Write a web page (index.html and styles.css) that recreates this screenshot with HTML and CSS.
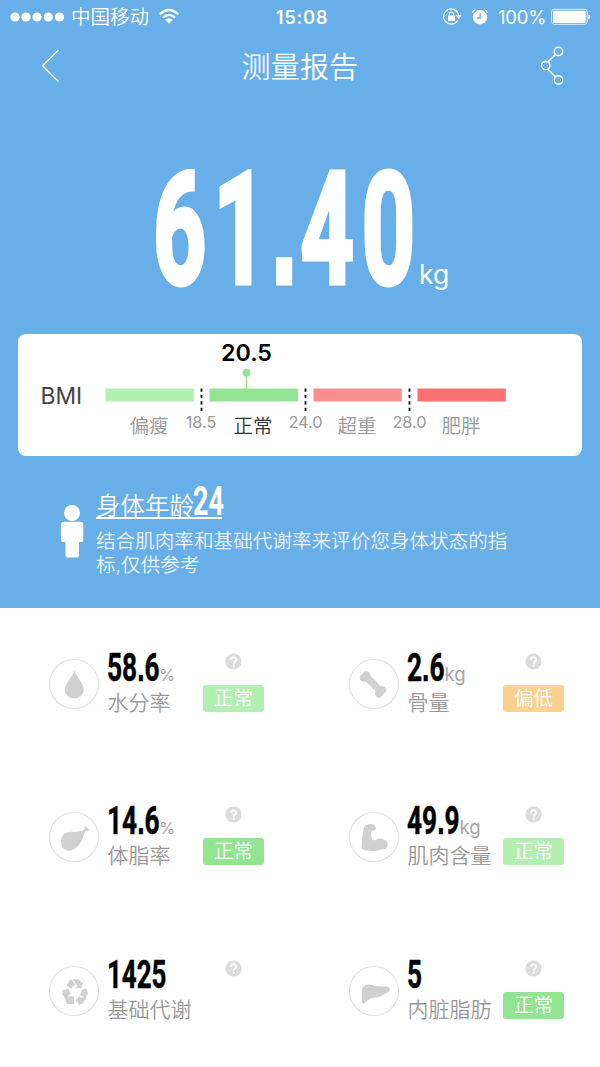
FILE: index.html
```html
<!DOCTYPE html>
<html lang="zh-CN">
<head>
<meta charset="utf-8">
<title>测量报告</title>
<link rel="stylesheet" href="styles.css">
</head>
<body>
<svg width="0" height="0" class="defs">
  <symbol id="help" viewBox="0 0 18 18"><circle cx="9" cy="9" r="8.6" fill="#dcdcdc"/><path d="M6.300 7.100a2.750 2.600 0 1 1 4.300 2.100Q9.200 10 9.100 11.200" fill="none" stroke="#fff" stroke-width="2"/><circle cx="9.100" cy="13.400" r="1.150" fill="#fff"/></symbol>
</svg>
<section class="hero">
  <div class="status-bar">
    <div class="carrier">
      <svg class="signal" width="55" height="10" viewBox="0 0 55 10" fill="#fff"><circle cx="5" cy="5" r="4.600"/><circle cx="16" cy="5" r="4.600"/><circle cx="27" cy="5" r="4.600"/><circle cx="38.300" cy="5" r="4.600"/><circle cx="49.500" cy="5" r="4.600"/></svg>
      <span class="operator">中国移动</span>
      <svg width="20" height="15" viewBox="0 0 20 15" fill="none" stroke="#fff" stroke-width="2.200"><path d="M.8 5.300Q10-3.300 19.200 5.300M3.800 8.700Q10 3 16.200 8.700"/><path d="M6.300 10.800Q10 7.800 13.700 10.800L10 14.700Z" fill="#fff" stroke="none"/></svg>
    </div>
    <time class="clock">15:08</time>
    <div class="indicators">
      <svg width="20" height="18" viewBox="0 0 20 18"><path d="M14.600 12.700A7.600 7.600 0 1 1 15.800 8" fill="none" stroke="#fff" stroke-width="1.200"/><path d="M12.800 7.200h6l-3 3.800z" fill="#fff"/><rect x="5" y="7.600" width="7" height="5.400" rx=".6" fill="#fff"/><path d="M6.400 8V6.200a2.100 2.100 0 0 1 4.200 0V8" fill="none" stroke="#fff" stroke-width="1.200"/></svg>
      <svg class="alarm" width="18" height="18" viewBox="0 0 18 18"><circle cx="9" cy="9.200" r="7.200" fill="#fff"/><path d="M9.200 5.300V10H5.600" fill="none" stroke="#68aee8" stroke-width="1.300"/><path d="M1.500 4.800Q2 2.500 4.300 1.800M16.500 4.800Q16 2.500 13.700 1.800" fill="none" stroke="#fff" stroke-width="1.400"/></svg>
      <span class="charge">100%</span>
      <svg width="40" height="18" viewBox="0 0 40 18"><rect x=".6" y="1.300" width="35.500" height="15" rx="2.500" fill="none" stroke="#fff" stroke-opacity=".8"/><rect x="2" y="2.700" width="32.700" height="12.200" rx="1.200" fill="#fff"/><path d="M37.200 6.200q2.300 1 2.300 2.500t-2.300 2.500z" fill="#fff"/></svg>
    </div>
  </div>
  <nav class="nav">
    <svg width="20" height="34" viewBox="0 0 20 34" fill="none" stroke="#fff" stroke-width="1.500"><path d="M17.500 1 1.500 16.700 17.500 32.500"/></svg>
    <h1 class="title">测量报告</h1>
    <svg width="26" height="42" viewBox="0 0 26 42" fill="none" stroke="#fff" stroke-width="1.500"><circle cx="18.500" cy="6.400" r="4.200"/><circle cx="5.800" cy="20.600" r="4.200"/><circle cx="18.500" cy="35" r="4.200"/><path d="M15.500 9.500 7.800 17M7.800 24.300l7.700 7.500"/></svg>
  </nav>
  <svg class="weight" width="600" height="160" viewBox="0 0 600 160">
    <text class="digits digits-large" transform="scale(.6 1)" x="255 356 452 501 603" y="132.500">61<tspan class="dot">.</tspan>40</text>
    <text class="weight-unit" x="419" y="134">kg</text>
  </svg>
  <div class="card">
    <span class="bmi-label">BMI</span>
    <svg width="410" height="122" viewBox="0 0 410 122">
      <text class="bmi-value" x="143.500" y="26.500" text-anchor="middle" textLength="51" lengthAdjust="spacingAndGlyphs">20.5</text>
      <path d="M143.500 38V56" stroke="#92e392" stroke-width="1.400"/><circle cx="143.500" cy="38.700" r="4" fill="#92e392"/>
      <g><rect x="2.500" y="54.500" width="88.300" height="13" fill="#b2efb1"/><rect x="106.500" y="54.500" width="88.300" height="13" fill="#92e392"/><rect x="210.500" y="54.500" width="88.300" height="13" fill="#f98e8e"/><rect x="314.500" y="54.500" width="88.300" height="13" fill="#fa7171"/></g>
      <path d="M98.500 54.500v23M202.500 54.500v23M306.500 54.500v23" stroke="#000" stroke-width="1.800" stroke-dasharray="3.300 3.100"/>
      <g class="ranges" text-anchor="middle"><text x="46" y="99">偏瘦</text><text class="current" x="150" y="99">正常</text><text x="254" y="99">超重</text><text x="358" y="99">肥胖</text></g>
      <g class="limits" text-anchor="middle"><text x="98" y="94">18.5</text><text x="202.500" y="94">24.0</text><text x="306.500" y="94">28.0</text></g>
    </svg>
  </div>
  <div class="age">
    <svg width="24" height="55" viewBox="0 0 24 55" fill="#fff"><circle cx="12" cy="9" r="8"/><path d="M4 17.800h16a3.300 3.300 0 0 1 3.300 3.300V36a2 2 0 0 1-2 2H19v13.500a2 2 0 0 1-2 2H7.500a2 2 0 0 1-2-2V38H2.900a2 2 0 0 1-2-2V21.100A3.300 3.300 0 0 1 4 17.800z"/></svg>
    <div class="age-text">
      <div class="age-title"><span>身体年龄</span><svg width="30" height="34" viewBox="0 0 30 34"><text class="digits" fill="#fff" x="0" y="30.500" textLength="31" lengthAdjust="spacingAndGlyphs">24</text></svg></div>
      <p class="note">结合肌肉率和基础代谢率来评价您身体状态的指<br>标,仅供参考</p>
    </div>
  </div>
</section>
<main class="metrics">
  <article class="metric">
    <svg class="icon" viewBox="0 0 50 50"><circle class="ring" cx="25" cy="25" r="24.500"/><path d="M25.500 11.500C23.500 18 15.800 24.500 15.800 31a9.500 8.600 0 0 0 19 0C34.800 24.500 27.500 18 25.500 11.500z"/></svg>
    <div class="reading"><svg class="number" width="95" height="40"><text class="digits" x="-1" y="29.500" textLength="52.500" lengthAdjust="spacingAndGlyphs">58<tspan class="dot">.</tspan>6</text><text class="unit percent" x="51" y="30">%</text></svg><span class="name">水分率</span></div>
    <div class="state"><svg class="help"><use href="#help"/></svg><span class="badge light">正常</span></div>
  </article>
  <article class="metric">
    <svg class="icon" viewBox="0 0 50 50"><circle class="ring" cx="25" cy="25" r="24.500"/><path d="M12.300 15.500Q14.200 15.300 14.600 13.400C16.200 11.500 21.500 11.800 21.700 17L31.500 27.200Q34.500 26.500 36.500 28.700 38.700 31.700 35.500 34 33.300 34.500 33 37 30.500 40.500 27.500 38 25.500 36 26.700 32L17 22.700Q11.700 23.500 10.700 19.500 10.500 16.500 12.300 15.500z"/></svg>
    <div class="reading"><svg class="number" width="95" height="40"><text class="digits" x="-1" y="29.500" textLength="37.500" lengthAdjust="spacingAndGlyphs">2<tspan class="dot">.</tspan>6</text><text class="unit" x="36.500" y="30">kg</text></svg><span class="name">骨量</span></div>
    <div class="state"><svg class="help"><use href="#help"/></svg><span class="badge orange">偏低</span></div>
  </article>
  <article class="metric">
    <svg class="icon" viewBox="0 0 50 50"><circle class="ring" cx="25" cy="25" r="24.500"/><path d="M12.200 31C11 23 17 19.500 23 19.800Q29 20.800 34.500 18.300L35.800 16.800Q34.500 14.300 36.900 14.300L38.300 15.900 40 17.200Q40 19.500 37.300 18.700L35.700 20.300C34.300 24.500 33.300 29 29.500 33.500 23.500 41 13.200 40.500 12.200 31z"/></svg>
    <div class="reading"><svg class="number" width="95" height="40"><text class="digits" x="-1" y="29.500" textLength="52.500" lengthAdjust="spacingAndGlyphs">14<tspan class="dot">.</tspan>6</text><text class="unit percent" x="51" y="30">%</text></svg><span class="name">体脂率</span></div>
    <div class="state"><svg class="help"><use href="#help"/></svg><span class="badge">正常</span></div>
  </article>
  <article class="metric">
    <svg class="icon" viewBox="0 0 50 50"><circle class="ring" cx="25" cy="25" r="24.500"/><path d="M13 29L14.300 18Q15 13.300 17.500 13 22.500 10.800 26 13.500 28.300 17.500 25.300 18.500 22.500 17.800 21.800 20.500L22.800 27.500Q26 29.500 28.500 26.700 31.500 25.500 35.500 28 39.200 27.200 38.500 34.500 37.500 38 33.500 37 29 40.300 19 38.500 12.800 38.300 12.500 35.500z"/></svg>
    <div class="reading"><svg class="number" width="95" height="40"><text class="digits" x="-1" y="29.500" textLength="52.500" lengthAdjust="spacingAndGlyphs">49<tspan class="dot">.</tspan>9</text><text class="unit" x="51.500" y="30">kg</text></svg><span class="name">肌肉含量</span></div>
    <div class="state"><svg class="help"><use href="#help"/></svg><span class="badge light">正常</span></div>
  </article>
  <article class="metric">
    <svg class="icon" viewBox="0 0 50 50"><circle class="ring" cx="25" cy="25" r="24.500"/><path d="M17.500 19.500L20.500 14.500Q21.200 13.500 23 13.500L26 18.500 22.500 22.500zM23.500 13.300h5.300Q30.500 13.300 31.500 15L32.500 17 34.500 16 32 22.500 26 21.300 28.300 20zM12.500 24.500l7-1.500 2.500 6.500-2-1-3 5.500-3.500-5.500q-.7-1.200.3-2.200zM32.500 24.500l4.300-2.500 1.800 3.500q.8 1.600-.2 3l-2.200 3.500-5-3zM16.800 34l2.500-3.800H25V38h-5.500q-1.500 0-2-1zM26.700 34.200l4.300-5V31.500h6.500L34.500 36.500q-.8 1.500-2.500 1.500h-1v2z"/></svg>
    <div class="reading"><svg class="number" width="95" height="40"><text class="digits" x="-1" y="29.500" textLength="59.500" lengthAdjust="spacingAndGlyphs">1425</text></svg><span class="name">基础代谢</span></div>
    <div class="state"><svg class="help"><use href="#help"/></svg></div>
  </article>
  <article class="metric">
    <svg class="icon" viewBox="0 0 50 50"><circle class="ring" cx="25" cy="25" r="24.500"/><path d="M12.800 25.500Q12.700 19.500 19 18.600 22 18.300 25.500 20 30 20.800 37 20.300 41.500 21 40.800 24 40.500 26 36.500 27.500 33 30.500 26.500 31.500 21 32 18.500 34.500 15.200 38 13.800 37.500 12.900 36.500 12.900 34z"/></svg>
    <div class="reading"><svg class="number" width="95" height="40"><text class="digits" x="-1" y="29.500" textLength="15" lengthAdjust="spacingAndGlyphs">5</text></svg><span class="name">内脏脂肪</span></div>
    <div class="state"><svg class="help"><use href="#help"/></svg><span class="badge">正常</span></div>
  </article>
</main>
</body>
</html>
```
FILE: styles.css
```css
* { box-sizing: border-box; }
body { margin: 0; width: 600px; height: 1067px; overflow: hidden; background: #fff; font-family: Inter, "Noto Sans CJK SC", sans-serif; }
svg { display: block; flex: none; overflow: visible; }
.defs { display: none; }
.hero { height: 608px; background: #68aee8; color: #fff; }

.status-bar { display: grid; grid-template-columns: 1fr auto 1fr; align-items: center; height: 33px; padding: 0 9px 0 10px; }
.carrier, .indicators { display: flex; align-items: center; }
.operator { margin: 0 10px 0 6px; font-size: 19.500px; font-weight: 350; line-height: 30px; white-space: nowrap; }
.clock { margin-left: 3px; font-size: 18.500px; font-weight: 600; letter-spacing: .6px; }
.indicators { justify-content: flex-end; }
.alarm { margin: 0 9px 0 8px; }
.charge { margin-right: 5px; width: 48px; font-size: 18.500px; font-weight: 400; letter-spacing: -.2px; white-space: nowrap; }

.nav { display: flex; justify-content: space-between; align-items: center; height: 66px; padding: 0 34px 0 41px; }
.title { margin: 3px 1px 0 0; font-size: 29px; font-weight: 350; line-height: 44px; letter-spacing: .3px; }

.weight { margin-top: 51px; }
.digits { font-family: Roboto, sans-serif; font-weight: 700; font-size: 40px; }
.dot { font-family: "Liberation Sans", sans-serif; }
.digits-large { font-size: 155px; fill: #fff; stroke: #fff; stroke-width: 5px; stroke-linejoin: miter; }
.number .digits { font-size: 39.500px; stroke: #000; stroke-width: .5px; }
.weight-unit { font-size: 26.500px; font-weight: 400; fill: #fff; }

.card { display: flex; width: 564.500px; height: 122px; margin: 24px 0 0 17.500px; padding-left: 23px; border-radius: 8px; background: #fff; }
.bmi-label { width: 62.500px; padding-top: 47px; font-size: 22.800px; line-height: 30px; font-weight: 400; color: #444; }
.bmi-value { font-size: 23px; font-weight: 600; fill: #000; }
.ranges { font-size: 19.500px; font-weight: 350; fill: #999; }
.ranges .current { fill: #333; }
.limits { font-size: 16.300px; font-weight: 400; fill: #999; }

.age { display: flex; gap: 12px; padding: 28px 0 0 60px; }
.age > svg { margin-top: 20px; }
.age-title { display: flex; width: 126px; height: 35px; border-bottom: 2px solid #fff; font-size: 24.500px; font-weight: 350; line-height: 36px; white-space: nowrap; }
.age-title span { width: 97px; padding-top: 4px; }
.note { margin: 10px 0 0; font-size: 19.600px; font-weight: 350; line-height: 24px; color: #e8f3fc; white-space: nowrap; }

.metrics { display: grid; grid-template-columns: 300px 300px; grid-auto-rows: 153.300px; }
.metric { display: flex; padding: 41px 0 0 48.500px; }
.icon { width: 50px; height: 50px; margin-top: 10px; fill: #d0d0d0; }
.ring { fill: #fff; stroke: #e2e2e2; stroke-width: 1.200px; }
.reading { width: 95px; margin: 2px 0 0 9.500px; }
.number { height: 34px; }
.name { display: block; margin: 3px 0 0 -.5px; font-size: 21px; line-height: 30px; font-weight: 350; color: #999; white-space: nowrap; }
.unit { font-size: 18.500px; font-weight: 400; fill: #a5a5a5; }
.percent { font-size: 16.500px; }
.state { display: flex; flex-direction: column; align-items: center; width: 61px; padding-top: 4px; }
.help { width: 17px; height: 17px; }
.badge { width: 61px; height: 27px; margin-top: 15px; border-radius: 3px; background: #92e392; color: #fff; font-size: 19.500px; font-weight: 350; line-height: 27px; text-align: center; }
.badge.light { background: #b2efb1; }
.badge.orange { background: #f9d28f; }
```
